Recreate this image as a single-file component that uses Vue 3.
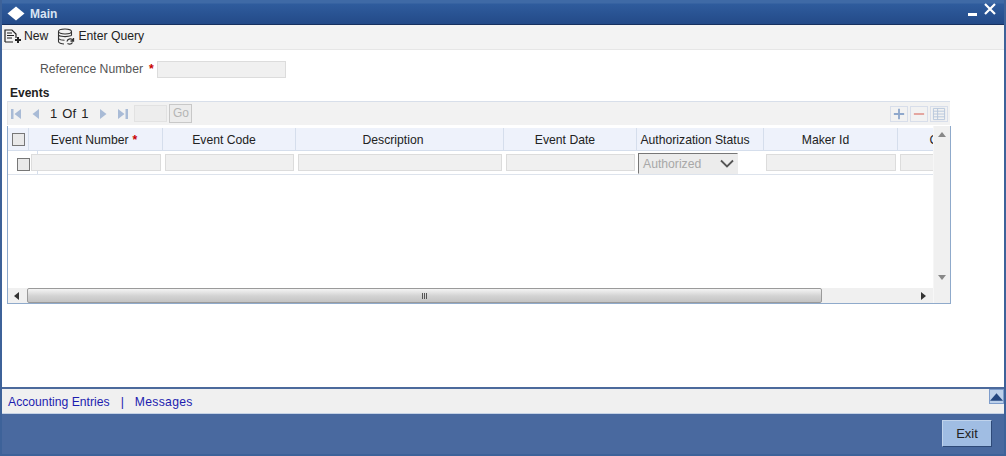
<script setup>
const cols = [
  { name: 'Event Number', w: 133, req: true },
  { name: 'Event Code', w: 133 },
  { name: 'Description', w: 208 },
  { name: 'Event Date', w: 133 },
  { name: 'Authorization Status', w: 127, select: true },
  { name: 'Maker Id', w: 134 },
  { name: 'Checker Id', w: 133 }
]
</script>

<template>
  <div class="win">
    <header class="title">
      <svg class="logo" width="18" height="15" viewBox="0 0 18 15"><path d="M9 0.500 17.500 7.500 9 14.500 0.500 7.500Z" fill="#fff"/></svg>
      <span class="title-text">Main</span>
      <span class="spacer"></span>
      <span class="min"></span>
      <svg class="close" width="12" height="12" viewBox="0 0 12 12"><path d="M1 1 11 11M11 1 1 11" stroke="#fff" stroke-width="2.2"/></svg>
    </header>

    <nav class="tools">
      <span class="tool">
        <svg width="18" height="16" viewBox="0 0 18 16" fill="none" stroke="#222" stroke-width="1.2"><path d="M1 14V2h7l4 4v4M3 5h5M3 7.500h7M3 10h5M1 14h8"/><path d="M14 9v6M11 12h6" stroke-width="2"/></svg>
        New
      </span>
      <span class="tool query">
        <svg width="18" height="17" viewBox="0 0 18 17" fill="none" stroke="#333" stroke-width="1.1"><ellipse cx="8" cy="3.500" rx="6.500" ry="2.500"/><path d="M1.500 3.500v10c0 1.400 3 2.500 5.500 2.500M14.500 3.500v4M1.500 7c1 1.600 8 2.400 13 .5M1.500 10.500c1 1.200 3.500 1.800 6 1.800"/><path d="M10 13.500c.5-3 5-3.500 6-1M16.500 10v3h-3M10.500 15.500c2 1 4 .5 5-1" stroke-width="1.300"/></svg>
        Enter Query
      </span>
    </nav>

    <main class="body">
      <div class="ref">
        <label>Reference Number</label>
        <span class="star">*</span>
        <span class="field ref-field"></span>
      </div>

      <h2 class="events">Events</h2>

      <div class="pager">
        <svg class="pg first" width="12" height="12" viewBox="0 0 12 12"><path d="M1 1h2.500v10H1ZM11 1v10L4.500 6Z" fill="#a9bbd6"/></svg>
        <svg class="pg prev" width="10" height="12" viewBox="0 0 10 12"><path d="M8 1v10L1.500 6Z" fill="#a9bbd6"/></svg>
        <span class="count">1 Of 1</span>
        <svg class="pg next" width="10" height="12" viewBox="0 0 10 12"><path d="M2 1v10l6.500-5Z" fill="#a9bbd6"/></svg>
        <svg class="pg last" width="12" height="12" viewBox="0 0 12 12"><path d="M1 1v10l6.500-5ZM8.500 1H11v10H8.500Z" fill="#a9bbd6"/></svg>
        <span class="page-input"></span>
        <span class="go">Go</span>
        <span class="spacer"></span>
        <span class="mini">
          <svg width="14" height="14" viewBox="0 0 15 15"><path d="M7.500 2v11M2 7.500h11" stroke="#8fa8cc" stroke-width="2"/></svg>
        </span>
        <span class="mini">
          <svg width="14" height="14" viewBox="0 0 15 15"><path d="M2 7.500h11" stroke="#e3a09a" stroke-width="2"/></svg>
        </span>
        <span class="mini">
          <svg width="14" height="14" viewBox="0 0 15 15" fill="none" stroke="#b6c6dc"><path d="M1.500 1.500h12v12h-12ZM1.500 4.500h12M1.500 7.500h12M1.500 10.500h12M6 1.500v12"/></svg>
        </span>
      </div>

      <section class="grid">
        <div class="grid-main">
          <div class="viewport">
            <div class="head">
              <div class="check-cell"><span class="check"></span></div>
              <div v-for="c in cols" :key="c.name" class="th" :style="{ width: c.w + 'px' }">
                <span>{{ c.name }}</span><span v-if="c.req" class="star th-star">*</span>
              </div>
            </div>
            <div class="row">
              <div class="check-cell row-check"><span class="check"></span></div>
              <div v-for="c in cols" :key="c.name" class="td" :style="{ width: c.w + 'px' }">
                <span v-if="c.select" class="select">
                  <span>Authorized</span>
                  <svg width="14" height="9" viewBox="0 0 14 9" fill="none"><path d="M1 1.500 7 7.500 13 1.500" stroke="#555" stroke-width="1.800"/></svg>
                </span>
                <span v-else class="field"></span>
              </div>
            </div>
          </div>
          <div class="vbar">
            <svg width="8" height="5" viewBox="0 0 8 5"><path d="M0 5 4 0 8 5Z" fill="#888"/></svg>
            <svg width="8" height="5" viewBox="0 0 8 5"><path d="M0 0H8L4 5Z" fill="#888"/></svg>
          </div>
        </div>
        <div class="hbar">
          <span class="arrow"><svg width="5" height="8" viewBox="0 0 5 8"><path d="M5 0V8L0 4Z" fill="#333"/></svg></span>
          <div class="thumb"><i></i><i></i><i></i></div>
          <span class="arrow end"><svg width="5" height="8" viewBox="0 0 5 8"><path d="M0 0V8L5 4Z" fill="#333"/></svg></span>
          <span class="corner"></span>
        </div>
      </section>
    </main>

    <div class="links">
      <a>Accounting Entries</a>
      <span class="sep">|</span>
      <a class="messages">Messages</a>
      <span class="spacer"></span>
      <span class="collapse"><svg width="14" height="8" viewBox="0 0 14 8"><path d="M0 8 7 0 14 8Z" fill="#23467f"/></svg></span>
    </div>

    <footer class="foot">
      <button class="exit">Exit</button>
    </footer>
  </div>
</template>

<style scoped>
.win {
  box-sizing: border-box;
  width: 1006px;
  height: 456px;
  display: flex;
  flex-direction: column;
  background: #fff;
  border: solid #3d6299;
  border-width: 0 2px 2px;
  font-family: "Liberation Sans", Arial, sans-serif;
  font-size: 12.200px;
  color: #222;
  overflow: hidden;
}
.spacer { flex: 1; }

.title {
  flex: 0 0 25px;
  box-sizing: border-box;
  display: flex;
  align-items: center;
  padding: 3px 8px 0 5px;
  background: linear-gradient(#3f6aa6 0, #3f6aa6 3px, #2f5c9d 4px, #234a88 24px);
  border-bottom: 1px solid #16305f;
}
.logo { margin-right: 5px; }
.title-text { color: #d9e4f4; font-weight: bold; font-size: 12px; }
.min { width: 9px; height: 3px; background: #fff; margin: 2px 7px 0 0; }
.close { margin-top: -9px; }

.tools {
  flex: 0 0 25px;
  box-sizing: border-box;
  display: flex;
  align-items: center;
  padding: 0 0 2px 2px;
  background: #f3f3f3;
  border-bottom: 1px solid #e6e6e6;
}
.tool { display: flex; align-items: center; gap: 2px; color: #222; }
.query { margin-left: 9px; gap: 3px; }

.body { flex: 1; padding: 0 0 0 5px; min-height: 0; }
.ref { display: flex; align-items: center; height: 18px; margin-top: 10px; padding-left: 33px; color: #555; }
.star { color: #c80000; font-weight: bold; margin: 0 3px 0 6px; }
.field {
  display: block;
  box-sizing: border-box;
  height: 17px;
  background: #f0f0f0;
  border: 1px solid #dcdcdc;
}
.ref-field { width: 129px; }

.events { margin: 8px 0 0 3px; font-size: 12px; line-height: 15px; color: #222; }

.pager {
  box-sizing: border-box;
  width: 943px;
  height: 24px;
  display: flex;
  align-items: center;
  background: #f2f2f2;
  border-top: 1px solid #d8dfea;
  border-left: 1px solid #e4e4e4;
  padding: 0 2px 0 2px;
}
.pg { flex: none; }
.prev { margin-left: 9px; }
.count { margin: 0 10px 0 9px; font-size: 13px; color: #222; word-spacing: 1.500px; }
.last { margin-left: 9px; }
.page-input { width: 33px; height: 17px; background: #ededed; border: 1px solid #e2e2e2; margin-left: 5px; box-sizing: border-box; }
.go {
  box-sizing: border-box;
  width: 23px;
  height: 19px;
  margin-left: 2px;
  border: 1px solid #c8c8c8;
  background: #ececec;
  color: #b5b5b5;
  font-size: 12px;
  line-height: 17px;
  text-align: center;
}
.mini {
  box-sizing: border-box;
  width: 18px;
  height: 16px;
  margin-left: 2px;
  border: 1px solid #d8deea;
  display: flex;
  align-items: center;
  justify-content: center;
}

.grid {
  box-sizing: border-box;
  width: 944px;
  height: 178px;
  margin-top: 1px;
  border: 1px solid #8faacb;
  border-top: 0;
  display: flex;
  flex-direction: column;
}
.grid-main { flex: 1; display: flex; min-height: 0; }
.viewport { width: 925px; overflow: hidden; }
.head { display: flex; height: 25px; box-sizing: border-box; background: #eef2fb; border-top: 2px solid #fff; border-bottom: 1px solid #d5deec; width: max-content; }
.check-cell { flex: 0 0 21px; box-sizing: border-box; display: flex; align-items: center; justify-content: center; border-right: 1px solid #d5deec; }
.check { display: block; box-sizing: border-box; width: 13px; height: 13px; background: #e9e9e9; border: 1px solid #777; }
.th {
  flex: none;
  box-sizing: border-box;
  display: flex;
  align-items: center;
  justify-content: center;
  white-space: nowrap;
  padding: 1px 10px 0 0;
  border-right: 1px solid #d5deec;
  color: #222;
}
.head .th:nth-child(2) { width: 134px !important; padding-right: 3px; }
.head .th:nth-child(4) { padding-right: 13px; }
.th-star { margin: 0 0 0 4px; }
.row { display: flex; height: 24px; box-sizing: border-box; border-bottom: 1px solid #dde3ec; width: max-content; }
.row-check { padding: 4px 0 0 9px; flex-basis: 30px; margin-right: -9px; justify-content: flex-start; }
.td { flex: none; box-sizing: border-box; padding: 3px 2px 0 2px; }
.row .td:nth-child(2) { width: 134px !important; }
.select {
  box-sizing: border-box;
  display: flex;
  align-items: center;
  justify-content: space-between;
  width: 100px;
  height: 21px;
  padding: 0 3px 0 4px;
  margin: -1px 0 0 -1px;
  background: #ececec;
  border: 1px solid;
  border-color: #777 #ececec #ececec #777;
  color: #a8a8a8;
}
.vbar {
  flex: 1;
  display: flex;
  flex-direction: column;
  align-items: center;
  justify-content: space-between;
  padding: 6px 0 8px;
  background: #f0f0f0;
  border-left: 1px solid #f6f6f6;
}
.hbar { flex: 0 0 15px; display: flex; align-items: center; background: #f0f0f0; }
.arrow { flex: 0 0 16px; display: flex; justify-content: center; }
.arrow.end { flex-basis: 111px; justify-content: flex-end; padding-right: 7px; box-sizing: border-box; }
.thumb {
  box-sizing: border-box;
  flex: 0 0 795px;
  height: 15px;
  margin-left: 3px;
  display: flex;
  align-items: center;
  justify-content: center;
  gap: 1px;
  border: 1px solid #9a9a9a;
  border-radius: 2px;
  background: linear-gradient(#f4f4f4, #d2d2d2 55%, #c4c4c4);
}
.thumb i { width: 1px; height: 6px; background: #555; }
.corner { flex: 1; align-self: stretch; background: #f0f0f0; border-left: 1px solid #f7f7f7; }

.links {
  flex: 0 0 27px;
  box-sizing: border-box;
  display: flex;
  align-items: center;
  padding: 0 0 0 6px;
  background: #f0f0f0;
  border-top: 2px solid #4c6a9c;
  border-bottom: 1px solid #c5d2e5;
  color: #1d1daf;
}
.links a, .sep { margin-top: 2px; }
.sep { margin-left: 11px; margin-right: 11px; }
.messages { letter-spacing: .3px; }
.collapse {
  box-sizing: border-box;
  width: 15px;
  height: 15px;
  align-self: flex-start;
  display: flex;
  align-items: center;
  justify-content: center;
  background: #bcd0ea;
  border: 1px solid #7d9ccb;
}

.foot {
  flex: 0 0 40px;
  display: flex;
  justify-content: flex-end;
  align-items: center;
  padding: 0 12px 0 0;
  background: #49699f;
}
.exit {
  box-sizing: border-box;
  width: 50px;
  height: 27px;
  margin-bottom: 1px;
  padding: 0;
  background: #a0bde3;
  border: 1px solid;
  border-color: #c0d3ec #2e4a78 #2e4a78 #c0d3ec;
  font: 13px "Liberation Sans", Arial, sans-serif;
  color: #222;
}
</style>
